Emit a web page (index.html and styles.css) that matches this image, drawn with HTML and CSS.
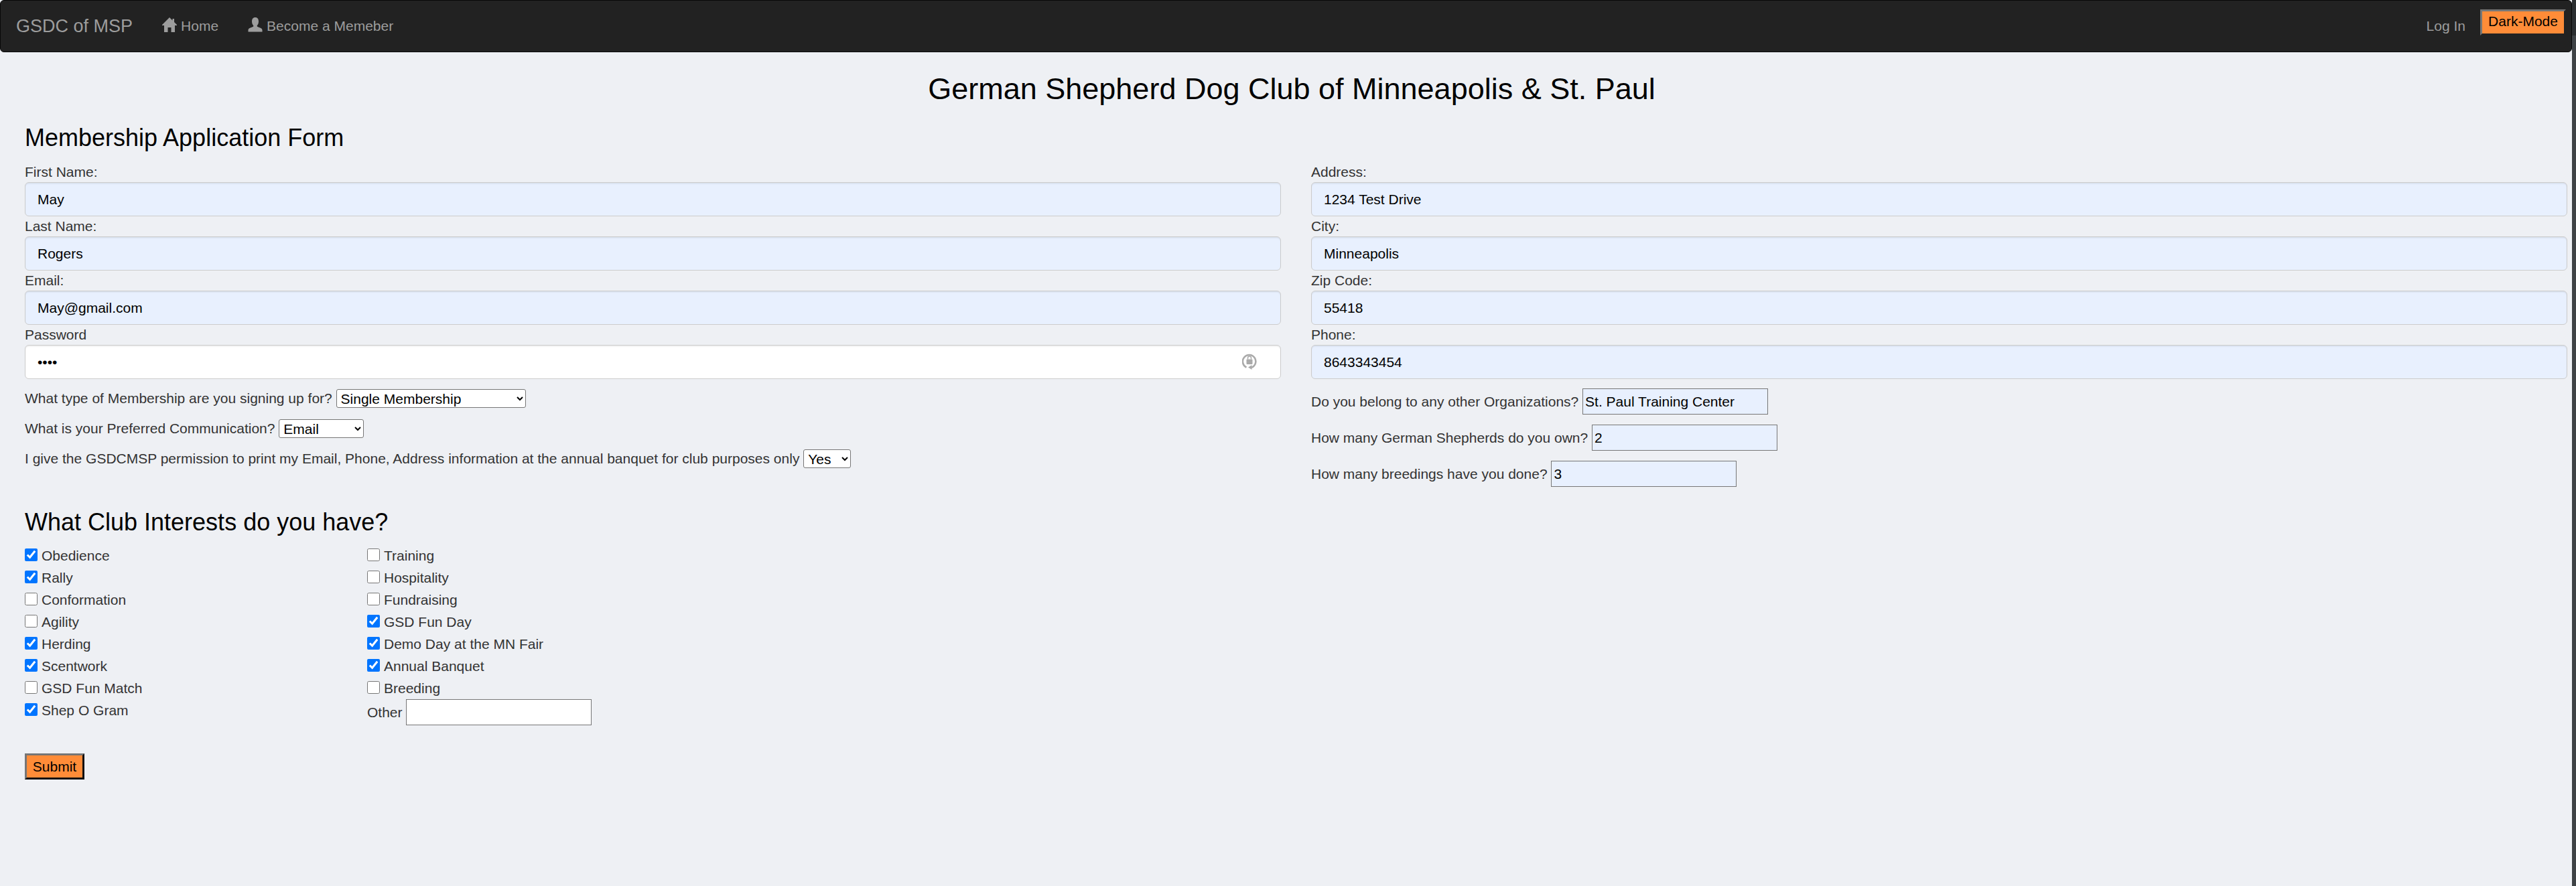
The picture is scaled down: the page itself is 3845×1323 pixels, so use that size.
FILE: index.html
```html
<!DOCTYPE html>
<html>
<head>
  <title>GSDC of MSP</title>
  <link rel="stylesheet" href="styles.css">
</head>
<body>
  <div class="page">
    <nav class="navbar">
      <a class="brand">GSDC of MSP</a>
      <a class="nav-link">
        <svg class="nav-icon" viewBox="0 0 22 22"><path d="M11 0 L15.5 4.5 V2 H18 V7 L22 11 V12 H19 V22 H13.5 V15 H8.5 V22 H3 V12 H0 V11 Z"/></svg>
        Home
      </a>
      <a class="nav-link">
        <svg class="nav-icon" viewBox="0 0 22 22"><path d="M11 0 C14.5 0 16 2.6 16 6 C16 9 15 11 13.8 12 V13.6 C17 15.4 21.5 16 21.5 19 V21.5 H0.5 V19 C0.5 16 5 15.4 8.2 13.6 V12 C7 11 6 9 6 6 C6 2.6 7.5 0 11 0 Z"/></svg>
        Become a Memeber
      </a>
      <a class="nav-link nav-right">Log In</a>
      <button class="btn dark-btn">Dark-Mode</button>
    </nav>

    <h1>German Shepherd Dog Club of Minneapolis &amp; St. Paul</h1>

    <form class="form">
      <h2>Membership Application Form</h2>
      <div class="columns">
        <div>
          <div class="field"><label>First Name:</label><input class="form-control filled" value="May"></div>
          <div class="field"><label>Last Name:</label><input class="form-control filled" value="Rogers"></div>
          <div class="field"><label>Email:</label><input class="form-control filled" value="May@gmail.com"></div>
          <div class="field">
            <label>Password</label>
            <div class="password-wrap">
              <input class="form-control" type="password" value="abcd">
              <svg class="key-icon" viewBox="0 0 22 26" fill="none">
                <path d="M6.5 21.5 A9.7 9.7 0 1 1 14 21.8" stroke="#aaa" stroke-width="2.6"/>
                <path d="M14.5 18 V25 L9 21.5 Z" fill="#aaa"/>
                <rect x="6.5" y="9.5" width="9" height="7.5" rx="1" fill="#aaa"/>
                <path d="M8.5 9.5 V7.5 A2.5 2.5 0 0 1 13.5 7.5 V9.5" stroke="#aaa" stroke-width="1.5"/>
              </svg>
            </div>
          </div>
          <div class="selects">
            <div class="inline-row">What type of Membership are you signing up for?
              <select class="select-type"><option>Single Membership</option></select></div>
            <div class="inline-row">What is your Preferred Communication?
              <select class="select-comm"><option>Email</option></select></div>
            <div class="inline-row">I give the GSDCMSP permission to print my Email, Phone, Address information at the annual banquet for club purposes only
              <select class="select-yes"><option>Yes</option></select></div>
          </div>
        </div>
        <div>
          <div class="field"><label>Address:</label><input class="form-control filled" value="1234 Test Drive"></div>
          <div class="field"><label>City:</label><input class="form-control filled" value="Minneapolis"></div>
          <div class="field"><label>Zip Code:</label><input class="form-control filled" value="55418"></div>
          <div class="field"><label>Phone:</label><input class="form-control filled" value="8643343454"></div>
          <div class="questions">
            <div class="question">Do you belong to any other Organizations? <input class="text-box filled" value="St. Paul Training Center"></div>
            <div class="question">How many German Shepherds do you own? <input class="text-box filled" value="2"></div>
            <div class="question">How many breedings have you done? <input class="text-box filled" value="3"></div>
          </div>
        </div>
      </div>

      <h2 class="interests-title">What Club Interests do you have?</h2>
      <div class="interests">
        <div>
          <label class="check"><input type="checkbox" checked>Obedience</label>
          <label class="check"><input type="checkbox" checked>Rally</label>
          <label class="check"><input type="checkbox">Conformation</label>
          <label class="check"><input type="checkbox">Agility</label>
          <label class="check"><input type="checkbox" checked>Herding</label>
          <label class="check"><input type="checkbox" checked>Scentwork</label>
          <label class="check"><input type="checkbox">GSD Fun Match</label>
          <label class="check"><input type="checkbox" checked>Shep O Gram</label>
        </div>
        <div>
          <label class="check"><input type="checkbox">Training</label>
          <label class="check"><input type="checkbox">Hospitality</label>
          <label class="check"><input type="checkbox">Fundraising</label>
          <label class="check"><input type="checkbox" checked>GSD Fun Day</label>
          <label class="check"><input type="checkbox" checked>Demo Day at the MN Fair</label>
          <label class="check"><input type="checkbox" checked>Annual Banquet</label>
          <label class="check"><input type="checkbox">Breeding</label>
          <div class="other">Other <input class="text-box"></div>
        </div>
      </div>

      <button class="btn submit-btn" type="button">Submit</button>
    </form>
  </div>
  <div class="scrollbar"><div class="scroll-thumb"></div></div>
</body>
</html>
```

FILE: styles.css
```css
* {
  box-sizing: border-box;
}
html, body {
  height: 100%;
}
body {
  margin: 0;
  display: flex;
  overflow: hidden;
  background-color: #fff;
  font-family: "Liberation Sans", Arial, sans-serif;
  font-size: 21px;
  line-height: 30px;
  color: #333;
}
.page {
  flex: 1;
  min-width: 0;
  background-color: #eef0f4;
}
.scrollbar {
  width: 6px;
  background-color: #3f4346;
}
.scroll-thumb {
  height: 53px;
  background-color: #2b2e30;
}

/* Navbar */
.navbar {
  display: flex;
  height: 78px;
  align-items: center;
  padding: 0 8px 0 23px;
  background-color: #222;
  border: 1.5px solid #080808;
  border-radius: 6px;
  color: #9d9d9d;
}
.brand {
  font-size: 27px;
  margin-right: 44px;
}
.nav-link {
  display: flex;
  align-items: center;
  margin-right: 44px;
}
.nav-icon {
  width: 22px;
  height: 22px;
  margin: 0 6px 4px 0;
  fill: #9d9d9d;
}
.nav-right {
  margin-left: auto;
  margin-right: 22px;
}
.btn {
  font-family: inherit;
  font-size: 21px;
  line-height: 24px;
  color: #000;
  background-color: #ff8c38;
  border: 3px solid;
  padding: 0 8px;
  cursor: pointer;
}
.dark-btn {
  height: 39px;
  width: 128px;
  padding-bottom: 3px;
  margin-bottom: 11px;
  border-color: #767676 #222 #222 #767676;
}

/* Form */
h1 {
  margin: 30px 0 28px;
  padding-left: 17px;
  font-size: 45px;
  font-weight: 400;
  line-height: 50px;
  text-align: center;
  color: #000;
}
h2 {
  margin: 0 0 16px;
  font-size: 36px;
  font-weight: 400;
  line-height: 40px;
  color: #000;
}
.form {
  padding: 0 7px 0 37px;
}
.columns {
  display: grid;
  grid-template-columns: 1875px 1875px;
  column-gap: 45px;
}
.field label {
  display: block;
}
.form-control {
  display: block;
  width: 100%;
  height: 51px;
  padding: 0 18px;
  font-family: inherit;
  font-size: 21px;
  color: #000;
  background-color: #fff;
  border: 1.5px solid #ccc;
  border-radius: 6px;
  box-shadow: inset 0 1.5px 1.5px rgba(0, 0, 0, .075);
}
.filled {
  background-color: #e8f0fe;
}
.password-wrap {
  position: relative;
}
.key-icon {
  position: absolute;
  top: 12px;
  right: 36px;
  width: 22px;
  height: 26px;
}
.selects {
  padding-top: 15px;
}
.inline-row {
  height: 28px;
  margin-bottom: 17px;
  line-height: 28px;
}
select {
  height: 28px;
  padding-left: 2px;
  vertical-align: top;
  font-family: inherit;
  font-size: 21px;
  background-color: #fff;
  border: 1.5px solid #767676;
  border-radius: 3px;
}
.select-type {
  width: 283px;
}
.select-comm {
  width: 127px;
}
.select-yes {
  width: 71px;
}
.questions {
  padding-top: 14px;
}
.question {
  height: 39px;
  margin-bottom: 15px;
  line-height: 39px;
}
.text-box {
  width: 277px;
  height: 39px;
  padding: 0 3px;
  vertical-align: top;
  font-family: inherit;
  font-size: 21px;
  color: #000;
  border: 1.5px solid #767676;
}
input.text-box:not(.filled) {
  background-color: #fff;
}

/* Interests */
.interests-title {
  margin: 0 0 13px;
  padding-top: 18px;
}
.interests {
  display: grid;
  grid-template-columns: 511px 1fr;
}
.check {
  display: flex;
  align-items: center;
  height: 33px;
}
.check input {
  width: 19px;
  height: 19px;
  margin: 0 6px 3px 0;
}
.other {
  height: 39px;
  line-height: 39px;
}
.submit-btn {
  display: block;
  width: 89px;
  height: 39px;
  margin-top: 42px;
  border-color: #767676 #111 #111 #767676;
}
```
